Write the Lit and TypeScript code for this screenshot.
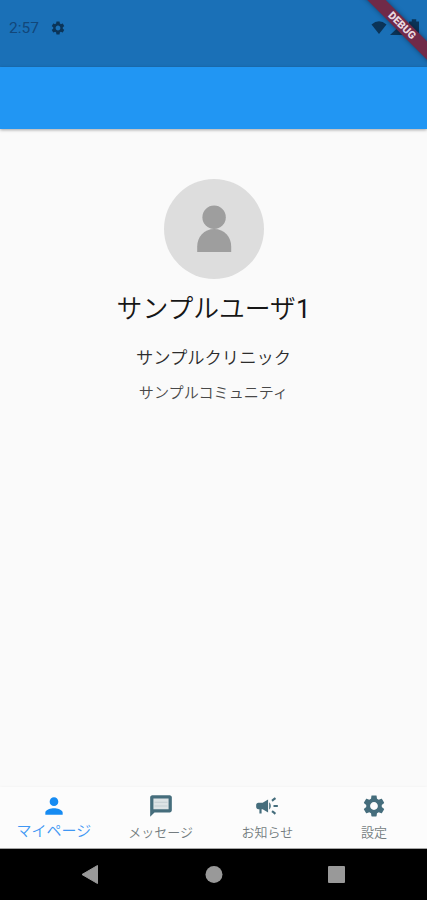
import { LitElement, html, css, svg } from "lit";
import { customElement } from "lit/decorators.js";
import { classMap } from "lit/directives/class-map.js";

const GEAR =
  "M19.14 12.94c.04-.3.06-.61.06-.94 0-.32-.02-.64-.07-.94l2.03-1.58c.18-.14.23-.41.12-.61l-1.92-3.32c-.12-.22-.37-.29-.59-.22l-2.39.96c-.5-.38-1.03-.7-1.62-.94l-.36-2.54c-.04-.24-.24-.41-.48-.41h-3.84c-.24 0-.43.17-.47.41l-.36 2.54c-.59.24-1.13.57-1.62.94l-2.39-.96c-.22-.08-.47 0-.59.22L2.74 8.87c-.12.21-.08.47.12.61l2.03 1.58c-.05.3-.09.63-.09.94s.02.64.07.94l-2.03 1.58c-.18.14-.23.41-.12.61l1.92 3.32c.12.22.37.29.59.22l2.39-.96c.5.38 1.03.7 1.62.94l.36 2.54c.05.24.24.41.48.41h3.84c.24 0 .44-.17.47-.41l.36-2.54c.59-.24 1.13-.56 1.62-.94l2.39.96c.22.08.47 0 .59-.22l1.92-3.32c.12-.22.07-.47-.12-.61l-2.01-1.58zM12 15.6c-1.98 0-3.6-1.62-3.6-3.6s1.62-3.6 3.6-3.6 3.6 1.62 3.6 3.6-1.62 3.6-3.6 3.6z";

const TABS = [
  {
    label: "マイページ",
    active: true,
    icon: svg`<path d="M12 12c2.21 0 4-1.79 4-4s-1.79-4-4-4-4 1.79-4 4 1.79 4 4 4zm0 2c-2.67 0-8 1.34-8 4v2h16v-2c0-2.66-5.33-4-8-4z"/>`,
  },
  {
    label: "メッセージ",
    active: false,
    icon: svg`<path fill="#dde3e5" d="M4 4h16v12H4z"/><path fill-rule="evenodd" d="M20 2H4c-1.1 0-2 .9-2 2v18l4-4h14c1.1 0 2-.9 2-2V4c0-1.1-.9-2-2-2zM5 5h14v10H5z"/><path fill="#c2cdd1" d="M6 8h12v1H6zM6 11.5h12v1H6z"/>`,
  },
  {
    label: "お知らせ",
    active: false,
    icon: svg`<path d="M18 11v2h4v-2h-4zM16 17.61c.96.71 2.21 1.65 3.2 2.39.4-.53.8-1.07 1.2-1.6-.99-.74-2.24-1.68-3.2-2.4-.4.54-.8 1.08-1.2 1.61zM20.4 5.6c-.4-.53-.8-1.07-1.2-1.6-.99.74-2.24 1.68-3.2 2.4.4.53.8 1.07 1.2 1.6.96-.72 2.21-1.65 3.2-2.4zM4 9c-1.1 0-2 .9-2 2v2c0 1.1.9 2 2 2h1v4h2v-4h1l5 3V6L8 9H4zM15.5 12c0-1.33-.58-2.53-1.5-3.35v6.69c.92-.81 1.5-2.01 1.5-3.34z"/>`,
  },
  { label: "設定", active: false, icon: svg`<path d=${GEAR} />` },
];

@customElement("app-root")
export class AppRoot extends LitElement {
  static styles = css`
    :host {
      display: flex;
      flex-direction: column;
      position: relative;
      width: 100%;
      height: 900px;
      overflow: hidden;
      background: #fafafa;
      font-family: Roboto, "Noto Sans CJK JP", sans-serif;
    }
    svg {
      display: block;
      fill: currentColor;
    }
    .status {
      display: flex;
      align-items: center;
      flex: none;
      box-sizing: border-box;
      height: 67px;
      padding: 0 8px 12px 9px;
      background: #1a70b7;
      color: #0b3458;
    }
    .time {
      width: 41px;
      font-size: 15.5px;
      line-height: 20px;
      color: #12477a;
    }
    .signals {
      display: flex;
      align-items: center;
      margin: -1px 0 0 auto;
      gap: 3px;
    }
    .appbar {
      flex: none;
      height: 61.5px;
      background: #2196f3;
      box-shadow: 0 1px 3px rgba(0, 0, 0, 0.35);
    }
    .debug {
      position: absolute;
      left: 342px;
      top: 18.5px;
      width: 120px;
      height: 13px;
      transform: rotate(45deg);
      background: #702a48;
      box-shadow: 0 0 5px rgba(0, 0, 0, 0.4);
      color: #ead9e0;
      text-align: center;
      font-size: 10.6px;
      font-weight: 900;
      line-height: 13px;
    }
    .profile {
      flex: 1;
      display: flex;
      flex-direction: column;
      align-items: center;
      padding-top: 50.5px;
      color: #161616;
      white-space: nowrap;
    }
    .avatar {
      width: 100px;
      height: 100px;
      border-radius: 50%;
      background: #ddd;
      color: #9e9e9e;
    }
    .name {
      margin-top: 11px;
      font-size: 25.8px;
      font-weight: 350;
      line-height: 38px;
    }
    .number {
      font-weight: 400;
    }
    .clinic {
      margin-top: 16.5px;
      font-size: 17.3px;
      font-weight: 350;
      line-height: 26px;
      color: #2c2c2c;
    }
    .community {
      margin-top: 11.5px;
      font-size: 15.1px;
      font-weight: 350;
      line-height: 22px;
      color: #484848;
    }
    .tabs {
      flex: none;
      display: grid;
      grid-template-columns: repeat(4, 1fr);
      box-sizing: border-box;
      height: 62px;
      border-bottom: 1px solid #a5a5a5;
      background: #fcfcfc;
      box-shadow: 0 -1px 2px rgba(0, 0, 0, 0.025);
    }
    .tab {
      display: flex;
      flex-direction: column;
      align-items: center;
      padding: 6px 0 0 1px;
      color: #456d7c;
    }
    .label {
      margin-top: 4px;
      font-size: 13px;
      font-weight: 350;
      line-height: 20px;
      color: #747c80;
      white-space: nowrap;
    }
    .active {
      color: #168bf2;
    }
    .active .label {
      margin-top: 2px;
      font-size: 15px;
      color: #3f97f4;
    }
    .system {
      flex: none;
      height: 51px;
      background: #000;
      color: #999;
    }
  `;

  render() {
    return html`
      <div class="status">
        <span class="time">2:57</span>
        <svg width="16" height="16" viewBox="0 0 24 24"><path d=${GEAR} /></svg>
        <div class="signals">
          <svg width="16" height="13" viewBox="0 0 15 13"><path d="M0 3.5Q7.5-3 15 3.5L7.5 13z" /></svg>
          <svg width="16" height="15" viewBox="0 0 14 13"><path d="M14 0v13H0z" /></svg>
          <svg width="10" height="16" viewBox="0 0 9 14"><path d="M0 2h2.5V0h4v2H9v12H0z" /></svg>
        </div>
      </div>
      <div class="appbar"></div>
      <div class="profile">
        <svg class="avatar" viewBox="0 0 100 100">
          <circle cx="50.1" cy="38.3" r="11.7" />
          <path d="M33.2 73V67.5C33.2 58 40 50 50.2 50S67.2 58 67.2 67.5V73z" />
        </svg>
        <div class="name">サンプルユーザ<span class="number">1</span></div>
        <div class="clinic">サンプルクリニック</div>
        <div class="community">サンプルコミュニティ</div>
      </div>
      <div class="tabs">
        ${TABS.map(
          (t) => html`<div class=${classMap({ tab: true, active: t.active })}>
            <svg width="26" height="26" viewBox="0 0 24 24">${t.icon}</svg>
            <span class="label">${t.label}</span>
          </div>`
        )}
      </div>
      <div class="system">
        <svg width="427" height="51" viewBox="0 0 427 51">
          <path d="M82 25.5 97.5 16.5V34.5z" stroke="currentColor" stroke-linejoin="round" />
          <circle cx="214" cy="25.5" r="8.5" />
          <rect x="328" y="17" width="17" height="17" rx="1" />
        </svg>
      </div>
      <div class="debug">DEBUG</div>
    `;
  }
}
